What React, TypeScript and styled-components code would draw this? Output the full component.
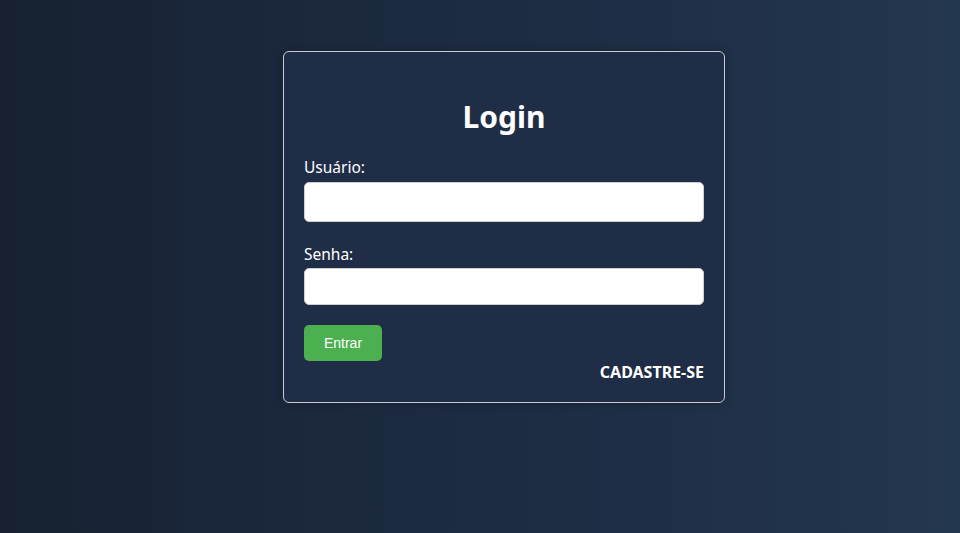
import React from "react";
import styled, { createGlobalStyle } from "styled-components";

const Global = createGlobalStyle`
  html, body { margin: 0; padding: 0; height: 100%; }
  body {
    font-family: "Noto Sans", "Open Sans", sans-serif;
    background: linear-gradient(90deg, #172131 0%, #1c2a40 40%, #1f2f47 70%, #23374f 100%);
    min-height: 533px;
  }
  #root { min-height: 533px; }
`;

const Page = styled.div`
  display: flex;
  justify-content: center;
  padding: 51px 0 0 48px;
  min-height: 533px;
  box-sizing: border-box;
`;

const Card = styled.form`
  width: 400px;
  padding: 20px;
  border: 1px solid #c8ccd2;
  border-radius: 6px;
  background: #1f2d46;
  box-shadow: 0 0 10px rgba(0, 0, 0, 0.25);
  display: flex;
  flex-direction: column;
  height: fit-content;
`;

const Title = styled.h1`
  margin: 27px 0 22px;
  font-size: 30px;
  line-height: 36px;
  font-weight: 700;
  color: #ffffff;
  text-align: center;
`;

const Label = styled.label<{ $gap: number }>`
  color: #ffffff;
  font-size: 15.5px;
  line-height: 20px;
  margin-bottom: ${(p) => p.$gap}px;
`;

const Input = styled.input<{ $h: number; $mb: number }>`
  height: ${(p) => p.$h}px;
  box-sizing: border-box;
  border: 1px solid #cfcfcf;
  border-radius: 5px;
  background: #ffffff;
  margin: 0 0 ${(p) => p.$mb}px;
  padding: 0 10px;
  font-size: 15px;
`;

const Button = styled.button`
  align-self: flex-start;
  width: 78px;
  height: 36px;
  border: none;
  border-radius: 5px;
  background: #4caf50;
  color: #ffffff;
  font-family: "Liberation Sans", Arial, sans-serif;
  font-size: 14px;
  cursor: pointer;
  margin-bottom: 2px;
`;

const RegisterLink = styled.a`
  align-self: flex-end;
  color: #ffffff;
  font-weight: 700;
  font-size: 16px;
  line-height: 19px;
  text-decoration: none;
`;

export default function App() {
  return (
    <>
      <Global />
      <Page>
        <Card onSubmit={(e) => e.preventDefault()}>
          <Title>Login</Title>
          <Label $gap={5}>Usuário:</Label>
          <Input type="text" $h={40} $mb={22} />
          <Label $gap={4}>Senha:</Label>
          <Input type="password" $h={37} $mb={20} />
          <Button type="submit">Entrar</Button>
          <RegisterLink href="#">CADASTRE-SE</RegisterLink>
        </Card>
      </Page>
    </>
  );
}
